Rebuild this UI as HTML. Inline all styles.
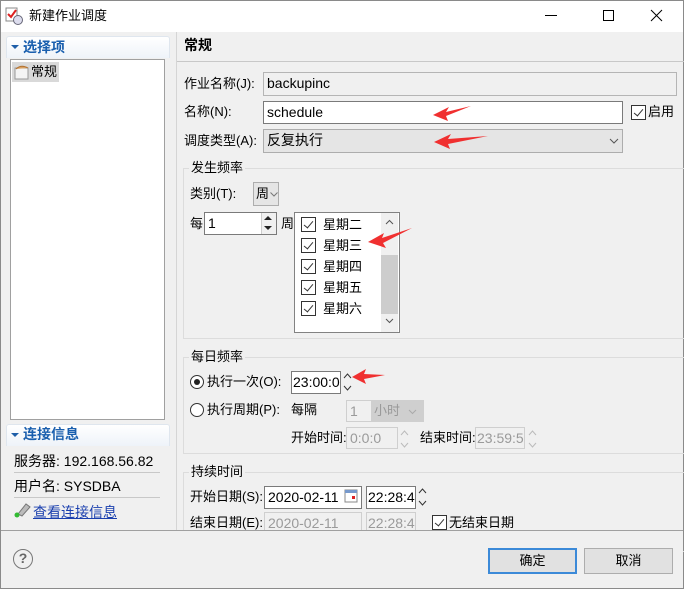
<!DOCTYPE html>
<html><head><meta charset="utf-8"><style>
*{margin:0;padding:0;box-sizing:border-box}
body{width:684px;height:589px;overflow:hidden;background:#f0f0f0;font-family:"Liberation Sans","Noto Sans CJK SC",sans-serif;font-size:13px;color:#000;position:relative}
.a{position:absolute;white-space:nowrap}
.t{position:absolute;white-space:nowrap;line-height:16px}
.in{position:absolute;border:1px solid #7a7a7a;background:#fff;padding-left:3px;line-height:20px;font-size:14px;overflow:hidden}
.dis{border-color:#cfcfcf;background:#f0f0f0;color:#9a9a9a}
.cb{position:absolute;width:15px;height:15px;border:1px solid #333;background:#fff}
.cb:after{content:"";position:absolute;left:4px;top:1px;width:4px;height:8px;border:solid #333;border-width:0 1.5px 1.5px 0;transform:rotate(40deg)}
.grp{position:absolute;border:1px solid #dcdcdc}
.gl{position:absolute;background:#f0f0f0;padding:0 2px;line-height:16px}
.hline{position:absolute;height:1px;background:#a0a0a0}
</style></head><body>
<div class="a" style="left:0;top:0;width:684px;height:32px;background:#fff"></div>
<div class="a" style="left:0;top:0;width:684px;height:589px;border:1px solid #8a8a8a"></div>
<svg class="a" style="left:5px;top:7px" width="18" height="18"><rect x="1" y="1" width="11" height="13" fill="#fff" stroke="#888"/><path d="M3 7l3 3 5-7" stroke="#d22" stroke-width="2" fill="none"/><circle cx="13" cy="13" r="4.5" fill="#dde" stroke="#667"/></svg>
<div class="t" style="left:29px;top:8px">新建作业调度</div>
<div class="a" style="left:545px;top:15px;width:12px;height:1px;background:#000"></div>
<div class="a" style="left:603px;top:10px;width:11px;height:11px;border:1px solid #000"></div>
<svg class="a" style="left:650px;top:9px" width="13" height="13"><path d="M1 1L12 12M12 1L1 12" stroke="#000" stroke-width="1"/></svg>

<div class="a" style="left:6px;top:36px;width:164px;height:22px;border:1px solid #dfe6ee;border-bottom:none;background:linear-gradient(#fff,#eef3f9);border-radius:3px 3px 0 0"></div>
<div class="a" style="left:11px;top:45px;width:0;height:0;border-left:4px solid transparent;border-right:4px solid transparent;border-top:4px solid #1e5ea8"></div>
<div class="t" style="left:23px;top:39px;color:#1a5fae;font-weight:bold;font-size:14px">选择项</div>
<div class="a" style="left:10px;top:59px;width:155px;height:361px;background:#fff;border:1px solid #a0a0a0"></div>
<div class="a" style="left:12px;top:62px;width:47px;height:20px;background:#d9d9d9"></div>
<svg class="a" style="left:14px;top:64px" width="16" height="16"><rect x="1" y="4" width="13" height="11" fill="#f4f4f4" stroke="#999"/><path d="M2 5q5-5 12-1" fill="#d9a060" stroke="#b07030"/></svg>
<div class="t" style="left:31px;top:64px">常规</div>

<div class="a" style="left:6px;top:424px;width:164px;height:22px;border:1px solid #dfe6ee;border-bottom:none;background:linear-gradient(#fff,#eef3f9);border-radius:3px 3px 0 0"></div>
<div class="a" style="left:11px;top:433px;width:0;height:0;border-left:4px solid transparent;border-right:4px solid transparent;border-top:4px solid #1e5ea8"></div>
<div class="t" style="left:23px;top:426px;color:#1a5fae;font-weight:bold;font-size:14px">连接信息</div>
<div class="t" style="left:14px;top:453px;font-size:14px">服务器: 192.168.56.82</div>
<div class="hline" style="left:14px;top:472px;width:146px;background:#c8c8c8"></div>
<div class="t" style="left:14px;top:478px;font-size:14px">用户名: SYSDBA</div>
<div class="hline" style="left:14px;top:497px;width:146px;background:#c8c8c8"></div>
<svg class="a" style="left:14px;top:502px" width="18" height="16"><path d="M4 12l8-10 4 3-8 9z" fill="#bbb" stroke="#777"/><circle cx="3" cy="13" r="2.5" fill="#3b3"/></svg>
<div class="t" style="left:33px;top:504px;color:#1a3fae;text-decoration:underline;font-size:14px">查看连接信息</div>

<div class="a" style="left:176px;top:32px;width:1px;height:498px;background:#d5d5d5"></div>
<div class="t" style="left:184px;top:37px;font-weight:bold;font-size:14px">常规</div>
<div class="hline" style="left:177px;top:61px;width:507px;background:#c8c8c8"></div>

<div class="t" style="left:184px;top:76px">作业名称(J):</div>
<div class="in" style="left:263px;top:72px;width:414px;height:24px;background:#f0f0f0;border-color:#b5b5b5">backupinc</div>
<div class="t" style="left:184px;top:104px">名称(N):</div>
<div class="in" style="left:263px;top:101px;width:360px;height:23px">schedule</div>
<div class="cb" style="left:631px;top:105px"></div>
<div class="t" style="left:648px;top:104px">启用</div>
<div class="t" style="left:184px;top:133px">调度类型(A):</div>
<div class="in" style="left:263px;top:129px;width:360px;height:24px;background:#e5e5e5;border-color:#adadad">反复执行</div>
<svg class="a" style="left:609px;top:138px" width="10" height="6"><path d="M1 1l4 4 4-4" stroke="#555" fill="none"/></svg>

<div class="grp" style="left:183px;top:168px;width:502px;height:171px"></div>
<div class="gl" style="left:189px;top:160px">发生频率</div>
<div class="t" style="left:190px;top:186px">类别(T):</div>
<div class="a" style="left:253px;top:182px;width:26px;height:24px;background:#e5e5e5;border:1px solid #adadad"></div>
<div class="t" style="left:256px;top:186px">周</div>
<svg class="a" style="left:270px;top:192px" width="8" height="5"><path d="M0.5 0.5l3.5 3.5 3.5-3.5" stroke="#777" fill="none"/></svg>
<div class="t" style="left:190px;top:216px">每</div>
<div class="in" style="left:204px;top:212px;width:73px;height:23px">1</div>
<div class="a" style="left:261px;top:213px;width:15px;height:21px;background:#f0f0f0;border-left:1px solid #ccc"></div>
<div class="a" style="left:264px;top:216px;border-left:4px solid transparent;border-right:4px solid transparent;border-bottom:4px solid #222"></div>
<div class="a" style="left:264px;top:226px;border-left:4px solid transparent;border-right:4px solid transparent;border-top:4px solid #222"></div>
<div class="t" style="left:281px;top:216px">周</div>
<div class="a" style="left:294px;top:212px;width:106px;height:121px;background:#fff;border:1px solid #828282"></div>
<div class="a" style="left:381px;top:213px;width:17px;height:119px;background:#f0f0f0"></div>
<div class="a" style="left:381px;top:255px;width:17px;height:59px;background:#cdcdcd"></div>
<svg class="a" style="left:385px;top:219px" width="9" height="6"><path d="M1 5l3.5-3.5 3.5 3.5" stroke="#555" fill="none"/></svg>
<svg class="a" style="left:385px;top:318px" width="9" height="6"><path d="M1 1l3.5 3.5 3.5-3.5" stroke="#555" fill="none"/></svg>
<div class="cb" style="left:301px;top:217px"></div><div class="t" style="left:323px;top:217px">星期二</div>
<div class="cb" style="left:301px;top:238px"></div><div class="t" style="left:323px;top:238px">星期三</div>
<div class="cb" style="left:301px;top:259px"></div><div class="t" style="left:323px;top:259px">星期四</div>
<div class="cb" style="left:301px;top:280px"></div><div class="t" style="left:323px;top:280px">星期五</div>
<div class="cb" style="left:301px;top:301px"></div><div class="t" style="left:323px;top:301px">星期六</div>

<div class="grp" style="left:183px;top:357px;width:502px;height:97px"></div>
<div class="gl" style="left:189px;top:349px">每日频率</div>
<div class="a" style="left:190px;top:375px;width:14px;height:14px;border-radius:50%;border:1px solid #333;background:#fff"></div>
<div class="a" style="left:194px;top:379px;width:6px;height:6px;border-radius:50%;background:#222"></div>
<div class="t" style="left:207px;top:374px">执行一次(O):</div>
<div class="in" style="left:291px;top:371px;width:50px;height:23px;padding-left:1px">23:00:00</div>
<svg class="a" style="left:343px;top:372px" width="9" height="20"><path d="M1 6l3.5-4 3.5 4M1 14l3.5 4 3.5-4" stroke="#333" fill="none"/></svg>
<div class="a" style="left:190px;top:403px;width:14px;height:14px;border-radius:50%;border:1px solid #333;background:#fff"></div>
<div class="t" style="left:207px;top:402px">执行周期(P):</div>
<div class="t" style="left:291px;top:402px">每隔</div>
<div class="in dis" style="left:346px;top:400px;width:52px;height:22px">1</div>
<div class="a" style="left:371px;top:400px;width:53px;height:22px;background:#cfcfcf"></div>
<div class="t" style="left:374px;top:403px;color:#999">小时</div>
<svg class="a" style="left:408px;top:409px" width="9" height="6"><path d="M1 1l3.5 3.5 3.5-3.5" stroke="#aaa" fill="none"/></svg>
<div class="t" style="left:291px;top:430px">开始时间:</div>
<div class="in dis" style="left:346px;top:427px;width:52px;height:22px">0:0:0</div>
<div class="t" style="left:420px;top:430px">结束时间:</div>
<div class="in dis" style="left:475px;top:427px;width:50px;height:22px;padding-left:1px">23:59:59</div>
<svg class="a" style="left:400px;top:429px" width="9" height="20"><path d="M1 6l3.5-4 3.5 4M1 14l3.5 4 3.5-4" stroke="#bbb" fill="none"/></svg>
<svg class="a" style="left:528px;top:429px" width="9" height="20"><path d="M1 6l3.5-4 3.5 4M1 14l3.5 4 3.5-4" stroke="#bbb" fill="none"/></svg>

<div class="grp" style="left:183px;top:472px;width:502px;height:80px"></div>
<div class="gl" style="left:189px;top:464px">持续时间</div>
<div class="t" style="left:190px;top:489px">开始日期(S):</div>
<div class="in" style="left:264px;top:486px;width:98px;height:23px">2020-02-11</div>
<svg class="a" style="left:344px;top:489px" width="14" height="14"><rect x="1" y="1" width="12" height="12" fill="#fff" stroke="#888"/><rect x="1" y="1" width="12" height="3" fill="#79c"/><rect x="8" y="7" width="3" height="3" fill="#d22"/></svg>
<div class="in" style="left:366px;top:486px;width:50px;height:23px;padding-left:1px">22:28:44</div>
<svg class="a" style="left:418px;top:487px" width="9" height="20"><path d="M1 6l3.5-4 3.5 4M1 14l3.5 4 3.5-4" stroke="#333" fill="none"/></svg>
<div class="t" style="left:190px;top:515px">结束日期(E):</div>
<div class="in dis" style="left:264px;top:512px;width:98px;height:23px">2020-02-11</div>
<div class="in dis" style="left:366px;top:512px;width:50px;height:23px;padding-left:1px">22:28:44</div>
<div class="cb" style="left:432px;top:515px"></div>
<div class="t" style="left:449px;top:515px">无结束日期</div>

<div class="a" style="left:1px;top:530px;width:682px;height:58px;background:#f0f0f0;border-top:1px solid #a0a0a0"></div>
<div class="a" style="left:13px;top:549px;width:20px;height:20px;border-radius:50%;border:1.5px solid #777;text-align:center;line-height:17px;color:#666;font-size:14px;font-weight:bold">?</div>
<div class="a" style="left:488px;top:548px;width:89px;height:26px;border:2px solid #3c8ad8;background:#e1e1e1;text-align:center;line-height:22px">确定</div>
<div class="a" style="left:584px;top:548px;width:89px;height:26px;border:1px solid #adadad;background:#e1e1e1;text-align:center;line-height:24px">取消</div>

<svg class="a" style="left:0;top:0" width="684" height="589">
<g fill="#f03030">
<polygon points="433,115 449,107 446,112 471,106 446,116 448,121"/>
<polygon points="434,142 451,134 448,139 488,136 448,144 450,149"/>
<polygon points="368,242 384,233 382,238 412,228 383,243 386,248"/>
<polygon points="352,377 366,369 364,374 385,375 364,379 366,384"/>
</g></svg>
</body></html>
